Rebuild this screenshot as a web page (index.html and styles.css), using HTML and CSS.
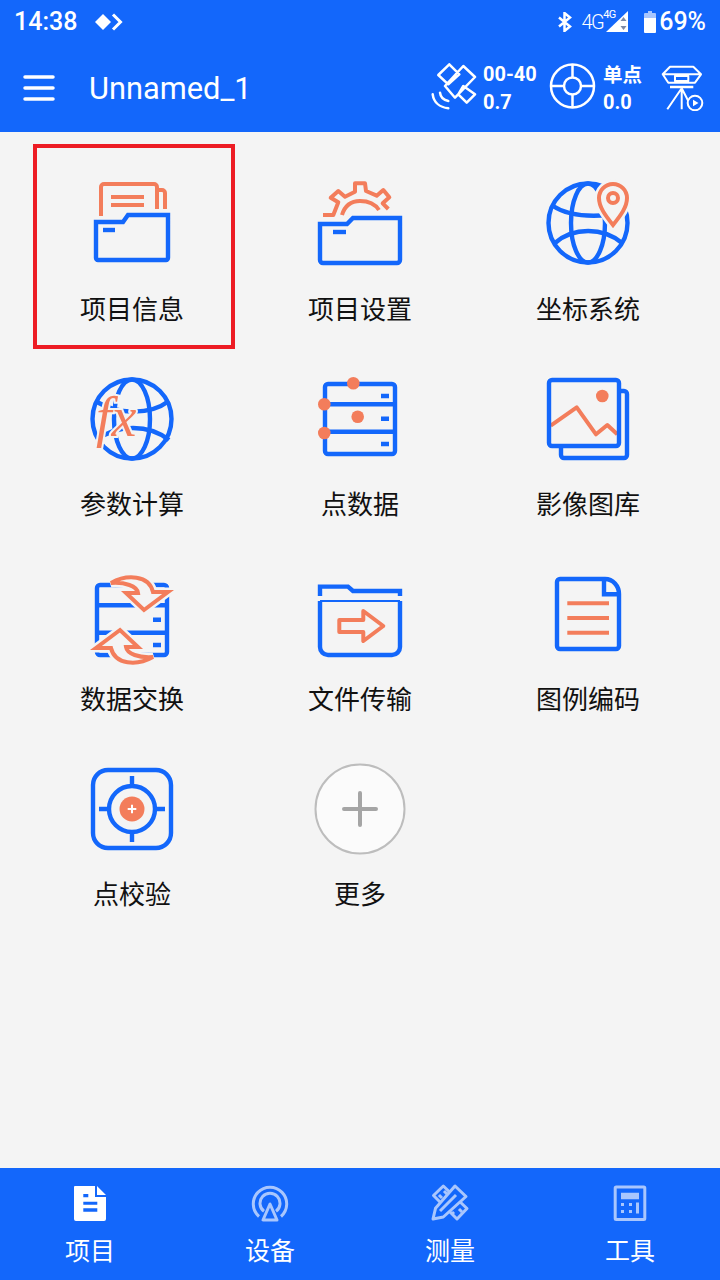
FILE: index.html
```html
<!DOCTYPE html>
<html lang="zh">
<head>
<meta charset="utf-8">
<title>Unnamed_1</title>
<link rel="stylesheet" href="styles.css">
</head>
<body>
<div class="page">
  <header class="header">
    <div class="status">
      <span class="time">14:38</span>
      <svg class="st-mark" viewBox="0 0 30 18"><path class="w-fill" d="M8 1l8 8-8 8-8-8z"/><path class="w-line w3" d="M18 1.500l7.500 7.500-7.500 7.500"/></svg>
      <span class="spacer"></span>
      <svg class="st-bt" viewBox="0 0 14 20"><path class="w-line w25" d="M1 5.500l11 9-5.500 4.500V1l5.500 4.500-11 9"/></svg>
      <span class="st-net">4G</span><span class="st-net-sm">4G</span>
      <svg class="st-sig" viewBox="0 0 22 21"><path class="w-fill" d="M0 21L22 0v21z"/><path class="dark-fill" d="M17.500 6l3 4h-6zM17.500 19l3-4h-6z"/></svg>
      <svg class="st-bat" viewBox="0 0 12 22"><path class="pale-fill" d="M4 0h4v2h3a1 1 0 0 1 1 1v4H0V3a1 1 0 0 1 1-1h3z"/><path class="w-fill" d="M0 7h12v14a1 1 0 0 1-1 1H1a1 1 0 0 1-1-1z"/></svg>
      <span class="pct">69%</span>
    </div>
    <div class="toolbar">
      <svg class="menu" viewBox="0 0 32 26"><path class="w-line w35 round" d="M2 2h28M2 13h28M2 24h28"/></svg>
      <span class="title">Unnamed_1</span>
      <span class="spacer"></span>
      <svg class="tb-sat" viewBox="0 0 48 48"><path class="w-line w25 join" d="M8.300 12L19.300 1.300l10 10-11 10zM33.300 3L45 14 25 34.700 15 23zM33.300 23L45 31.300l-8.300 8.400-8.400-8.400z"/><path class="w-line w25 round" d="M2.700 31.300c1 8 7 13 15.600 14M10 29.700c.5 4.500 3.500 7.500 8.300 8.300"/></svg>
      <div class="tb-val"><span>00-40</span><span>0.7</span></div>
      <svg class="tb-target" viewBox="0 0 48 48"><circle class="w-line w25" cx="23.500" cy="24" r="21.500"/><circle class="w-line w25" cx="23.500" cy="24" r="8.500"/><path class="w-line w25" d="M23.500 2.500v13M23.500 32.500v13M2 24h13M32 24h13"/></svg>
      <div class="tb-val tb-val-2"><span class="cjk">单点</span><span>0.0</span></div>
      <svg class="tb-tripod" viewBox="0 0 44 46"><path class="w-line w2 join" d="M9 1.700h23.300L40 9.300 34 17.700H7.300L1.700 9.300zM1.700 9.300H40M14 11h13.300v5H14z"/><path class="w-line w25" d="M9 22h23.300"/><path class="w-line w2" d="M20.700 23.300L6.300 44.300M20.700 23.300v21M20.700 23.300l6.600 12.700"/><circle class="w-line w2" cx="34" cy="38" r="7.300"/><path class="w-fill" d="M32 34.800l5.500 3.200-5.500 3.200z"/></svg>
    </div>
  </header>

  <main class="main">
    <div class="highlight"></div>
    <div class="grid">
      <div class="cell">
        <svg class="ic" viewBox="0 0 90 90">
          <path class="or" d="M14 37V8a3 3 0 0 1 3-3h50a3 3 0 0 1 3 3v22M72 11h3a3 3 0 0 1 3 3v16M24 18h33M24 26h33"/>
          <path class="bl" d="M9 43H36L41 36H81V79a2 2 0 0 1-2 2H11a2 2 0 0 1-2-2Z"/>
          <path class="bl" d="M16 51H28"/>
        </svg>
        <span class="label">项目信息</span>
      </div>
      <div class="cell">
        <svg class="ic" viewBox="0 0 90 90">
          <path class="or join" d="M8 36H18.300L23.300 23.300 15.700 18.700 23.300 12 30 17.700 40 12.700V4.300H50L51 12 61.700 16.700 68.300 11 74.300 18.300 67.700 24.300 73.300 30"/>
          <path class="or" d="M27 36C30 26 37 22 45 22 53 22 60 25 64 31"/>
          <path class="bl" d="M5 45H32L38 39H85V81a3 3 0 0 1-3 3H8a3 3 0 0 1-3-3Z"/>
          <path class="bl" d="M18 53H31"/>
        </svg>
        <span class="label">项目设置</span>
      </div>
      <div class="cell">
        <svg class="ic" viewBox="0 0 90 90">
          <circle class="bl" cx="45" cy="44" r="39.500"/>
          <ellipse class="bl" cx="45" cy="44" rx="17" ry="39.500"/>
          <path class="bl" d="M10 27C25 37 45 38 66 36M12 64C30 48 60 48 79 64"/>
          <path class="halo" d="M70 46C62 36 56 28 56 19a14 14 0 0 1 28 0C84 28 78 36 70 46Z"/>
          <path class="or" d="M70 46C62 36 56 28 56 19a14 14 0 0 1 28 0C84 28 78 36 70 46Z"/>
          <circle class="or" cx="70" cy="19" r="5"/>
        </svg>
        <span class="label">坐标系统</span>
      </div>
      <div class="cell">
        <svg class="ic" viewBox="0 0 90 90">
          <circle class="bl" cx="45" cy="45" r="39.500"/>
          <ellipse class="bl" cx="45" cy="45" rx="18" ry="39.500"/>
          <path class="bl" d="M10 28C30 40 62 42 82 27M10 66C30 50 62 50 82 66"/>
          <text class="fx" x="9" y="62">fx</text>
        </svg>
        <span class="label">参数计算</span>
      </div>
      <div class="cell">
        <svg class="ic" viewBox="0 0 90 90">
          <rect class="bl" x="10" y="10" width="70" height="70" rx="3"/>
          <path class="bl" d="M10 30.300H80M10 57.700H80M66 22H74M66 44.700H74M66 70H74"/>
          <circle class="or-fill" cx="38.300" cy="9.300" r="6.300"/>
          <circle class="or-fill" cx="9.300" cy="30.300" r="6.300"/>
          <circle class="or-fill" cx="42.700" cy="42.700" r="6.300"/>
          <circle class="or-fill" cx="9.300" cy="59" r="6.300"/>
        </svg>
        <span class="label">点数据</span>
      </div>
      <div class="cell">
        <svg class="ic" viewBox="0 0 90 90">
          <path class="bl" d="M78 17H81a3 3 0 0 1 3 3V81a3 3 0 0 1-3 3H21a3 3 0 0 1-3-3V73"/>
          <path class="or join" d="M7.700 51.700L33.700 33.300 53 60.300 64.300 51 74.300 60.300"/>
          <rect class="bl" x="6" y="6" width="70" height="66" rx="3"/>
          <circle class="or-fill" cx="59.300" cy="22" r="6.300"/>
        </svg>
        <span class="label">影像图库</span>
      </div>
      <div class="cell">
        <svg class="ic" viewBox="0 0 90 90">
          <rect class="bl" x="10" y="16" width="70" height="70" rx="3"/>
          <path class="bl" d="M10 36.300H80M10 63.700H80M66 50.700H74M66 76H74"/>
          <path class="halo" d="M24 14C40 5 62 6 66 23H81L57 41 39 24H51C50 17 38 13 24 14Z"/>
          <path class="or-arrow" d="M24 14C40 5 62 6 66 23H81L57 41 39 24H51C50 17 38 13 24 14Z"/>
          <g class="flip">
            <path class="halo" d="M24 14C40 5 62 6 66 23H81L57 41 39 24H51C50 17 38 13 24 14Z"/>
            <path class="or-arrow" d="M24 14C40 5 62 6 66 23H81L57 41 39 24H51C50 17 38 13 24 14Z"/>
          </g>
        </svg>
        <span class="label">数据交换</span>
      </div>
      <div class="cell">
        <svg class="ic" viewBox="0 0 90 90">
          <path class="bl" d="M5 27V17.600H33L38 22H85V27"/>
          <path class="bl thin" d="M5 32H85"/>
          <path class="bl" d="M5 32V78a8 8 0 0 0 8 8H77a8 8 0 0 0 8-8V32"/>
          <path class="or join" d="M24.300 51H48.300V42L68.300 57 48.300 72V63H24.300Z"/>
        </svg>
        <span class="label">文件传输</span>
      </div>
      <div class="cell">
        <svg class="ic" viewBox="0 0 90 90">
          <path class="bl" d="M17 10H62C70 10 76 17 76 25V77a3 3 0 0 1-3 3H17a3 3 0 0 1-3-3V13a3 3 0 0 1 3-3Z"/>
          <path class="bl" d="M61 10V25.300H76"/>
          <path class="or" d="M24.300 34.300H66M24.300 49H66M24.300 63.700H66"/>
        </svg>
        <span class="label">图例编码</span>
      </div>
      <div class="cell">
        <svg class="ic" viewBox="0 0 90 90">
          <rect class="bl" x="6" y="6" width="78" height="78" rx="15"/>
          <circle class="bl" cx="45" cy="45" r="23"/>
          <path class="bl" d="M45 12V22M45 68V78M12 45H22M68 45H78"/>
          <circle class="or-fill" cx="45" cy="45" r="12.500"/>
          <path class="w-line w2" d="M40.700 45H49.300M45 40.700V49.300"/>
        </svg>
        <span class="label">点校验</span>
      </div>
      <div class="cell">
        <svg class="ic" viewBox="0 0 90 90">
          <circle class="add-ring" cx="45" cy="45" r="44.500"/>
          <path class="add-plus" d="M29 45H61M45 29V61"/>
        </svg>
        <span class="label">更多</span>
      </div>
    </div>
  </main>

  <nav class="tabs">
    <div class="tab">
      <svg class="tab-ic" viewBox="0 0 40 40">
        <path class="w-fill" d="M5 3H25V14H36V36a2 2 0 0 1-2 2H6a2 2 0 0 1-2-2V4a1 1 0 0 1 1-1ZM27 3L36 12H27Z"/>
        <path class="tab-cut" d="M13.300 11H18.300V14.300H13.300ZM13.300 18.700H27.300V21.700H13.300ZM13.300 25.300H27.300V28.700H13.300Z"/>
      </svg>
      <span class="tab-label">项目</span>
    </div>
    <div class="tab">
      <svg class="tab-ic" viewBox="0 0 40 40">
        <path class="pale-line" d="M9 33.500A16.700 16.700 0 1 1 31 33.500M14 28.300A10 10 0 1 1 26 28.300"/>
        <path class="pale-line join" d="M20 21L13 37H27Z"/>
      </svg>
      <span class="tab-label">设备</span>
    </div>
    <div class="tab">
      <svg class="tab-ic" viewBox="0 0 40 40">
        <path class="pale-line join" d="M13.300 3L3.500 12.500 27 36 37 25.500Z"/>
        <path class="pale-line" d="M14 8l3 3M9 12l3 3M29 26l3 3M24 31l-2-2"/>
        <path class="pencil join" d="M25 3L36 13.500 13.300 34 3 36 5.500 25.300Z"/>
        <path class="pale-line" d="M26 12L10 28"/>
      </svg>
      <span class="tab-label">测量</span>
    </div>
    <div class="tab">
      <svg class="tab-ic" viewBox="0 0 40 40">
        <rect class="pale-line" x="5.200" y="4" width="29.600" height="32.600" rx="1"/>
        <path class="pale-fill" d="M11 9.700H29V16.300H11ZM11 20H14V23H11ZM19 20H22V23H19ZM11 27H14V30H11ZM19 27H22V30H19ZM26 19.500H29V30.500H26Z"/>
      </svg>
      <span class="tab-label">工具</span>
    </div>
  </nav>
</div>
</body>
</html>
```
FILE: styles.css
```css
* { box-sizing: border-box; }
html, body { margin: 0; padding: 0; }
body { width: 720px; height: 1280px; overflow: hidden; background: #f4f4f4; font-family: Roboto, "Noto Sans CJK SC", sans-serif; }
.page { width: 720px; height: 1280px; display: flex; flex-direction: column; }
.spacer { flex: 1; }
svg { display: block; flex: none; }

.header { height: 132px; background: #1367fb; color: #fff; flex: none; }
.status { height: 44px; display: flex; align-items: center; padding: 0 14px; font-weight: 500; font-size: 25px; }
.time { line-height: 44px; }
.st-mark { width: 30px; height: 18px; margin-left: 18px; margin-top: -1px; }
.st-bt { width: 14px; height: 20px; margin-right: 9px; }
.st-net { font-size: 20px; font-weight: 300; letter-spacing: -1.500px; line-height: 22px; }
.st-net-sm { font-size: 11px; font-weight: 400; letter-spacing: -.500px; line-height: 12px; margin-top: -14px; width: 0; white-space: nowrap; }
.st-sig { width: 22px; height: 21px; margin-left: 3px; margin-top: -1px; }
.st-bat { width: 12px; height: 22px; margin-left: 16px; margin-top: -1px; }
.pct { margin-left: 3px; line-height: 44px; }

.toolbar { height: 88px; display: flex; align-items: center; padding-left: 23px; padding-right: 15px; }
.menu { width: 32px; height: 26px; }
.title { font-size: 30.800px; margin-left: 34px; margin-top: 2px; line-height: 40px; }
.tb-sat { width: 48px; height: 48px; margin-top: -2px; }
.tb-val { display: flex; flex-direction: column; width: 66px; padding-left: 5px; font-size: 20px; font-weight: 700; line-height: 28px; }
.tb-val .cjk { font-family: "Noto Sans CJK SC", sans-serif; font-size: 19.500px; }
.tb-target { width: 48px; height: 48px; margin-left: 5px; margin-top: -4px; }
.tb-val-2 { width: 64px; padding-left: 6px; }
.tb-tripod { width: 44px; height: 46px; }

.main { flex: 1; position: relative; background: #f4f4f4; }
.highlight { position: absolute; left: 33px; top: 12px; width: 202px; height: 205px; border: 4px solid #ed1c24; }
.grid { display: grid; grid-template-columns: repeat(3, 228px); grid-auto-rows: 195px; padding: 47px 18px 0; }
.cell { display: flex; flex-direction: column; align-items: center; }
.ic { width: 90px; height: 90px; overflow: visible; }
.label { margin-top: 24px; font-family: "Noto Sans CJK SC", sans-serif; font-size: 26px; line-height: 30px; color: #111; }

.tabs { height: 112px; flex: none; display: grid; grid-template-columns: repeat(4, 180px); background: #1367fb; }
.tab { display: flex; flex-direction: column; align-items: center; padding-top: 15px; }
.tab-ic { width: 40px; height: 40px; }
.tab-label { margin-top: 11px; font-family: "Noto Sans CJK SC", sans-serif; font-size: 25px; line-height: 30px; color: #fff; }

.bl, .or, .halo, .or-arrow { fill: none; stroke-width: 4; }
.bl { stroke: #1367fb; stroke-width: 4.400; }
.bl.thin { stroke-width: 2; }
.or { stroke: #f37d5b; }
.or-fill { fill: #f37d5b; }
.or-arrow { stroke: #f37d5b; stroke-width: 4; stroke-linejoin: miter; }
.halo { stroke: #f4f4f4; stroke-width: 9; fill: #f4f4f4; }
.flip { transform: rotate(180deg); transform-origin: 45px 51px; }
.fx { font-family: "Liberation Serif", serif; font-style: italic; font-size: 56px; fill: #f37d5b; stroke: #f4f4f4; stroke-width: 4px; paint-order: stroke; }
.add-ring { fill: #fbfbfb; stroke: #bdbdbd; stroke-width: 2; }
.add-plus { fill: none; stroke: #a5a5a5; stroke-width: 4; stroke-linecap: round; }

.w-fill { fill: #fff; }
.w-line { fill: none; stroke: #fff; }
.w2 { stroke-width: 2; }
.w25 { stroke-width: 2.500; }
.w3 { stroke-width: 3; }
.w35 { stroke-width: 3.500; }
.round { stroke-linecap: round; }
.join { stroke-linejoin: round; }
.dark-fill { fill: #7d8aa5; }
.pale-fill { fill: #a9c6fd; }
.pale-line { fill: none; stroke: #a9c6fd; stroke-width: 3; }
.pencil { fill: #1367fb; stroke: #a9c6fd; stroke-width: 3; }
.tab-cut { fill: #1367fb; }
```
